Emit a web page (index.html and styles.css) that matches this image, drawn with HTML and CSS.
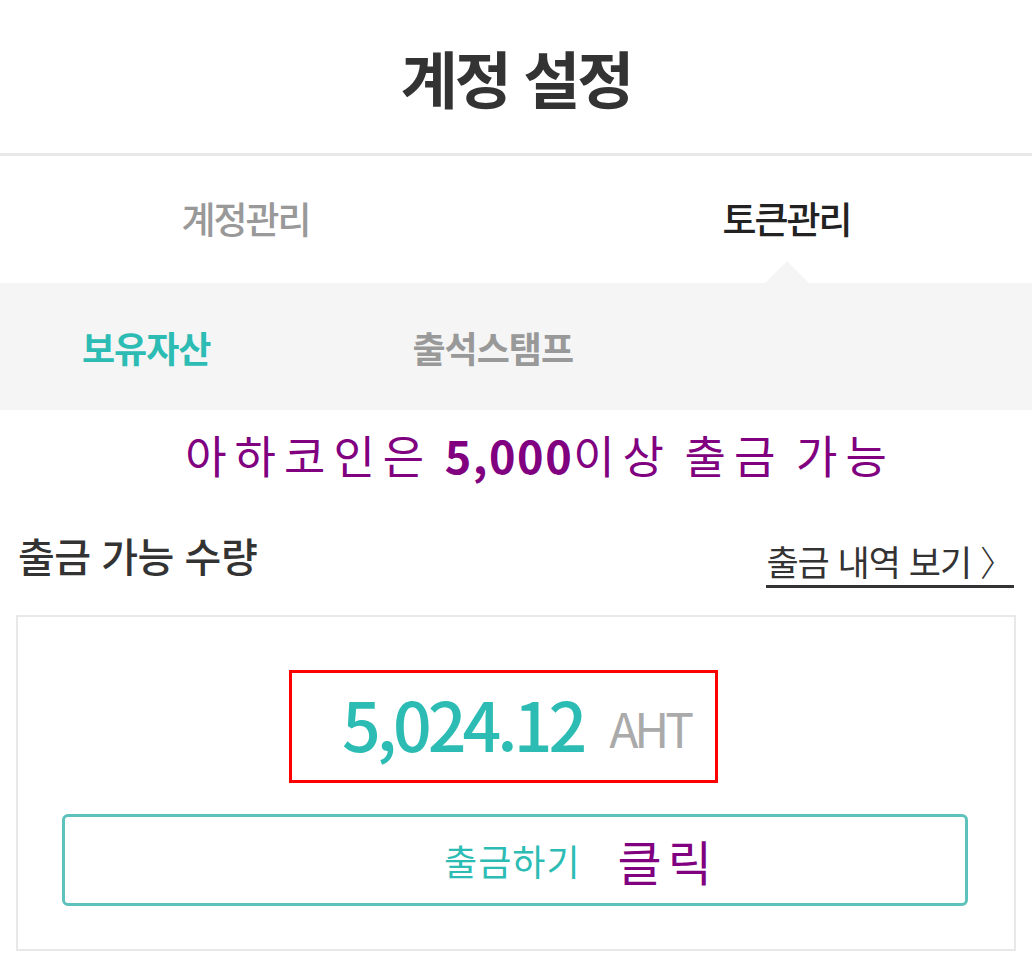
FILE: index.html
```html
<!DOCTYPE html>
<html lang="ko">
<head>
    <meta charset="UTF-8">
    <meta name="viewport" content="width=device-width, initial-scale=1.0">
    <title>계정 설정</title>
    <link rel="stylesheet" href="styles.css">
</head>
<body>
    <header class="page-header">
        <h1>계정 설정</h1>
    </header>

    <nav class="main-tabs">
        <a class="main-tab" href="#">계정관리</a>
        <a class="main-tab active" href="#">토큰관리</a>
    </nav>

    <nav class="sub-tabs">
        <a class="sub-tab active" href="#">보유자산</a>
        <a class="sub-tab" href="#">출석스탬프</a>
    </nav>

    <p class="notice">아하코인은 <b>5,000</b>이상 출금 가능</p>

    <main>
        <div class="section-head">
            <h2>출금 가능 수량</h2>
            <a class="history-link" href="#">출금 내역 보기 <span class="arrow">〉</span></a>
        </div>

        <section class="balance-box">
            <div class="amount">
                <span class="amount-value">5,024.12</span>
                <span class="amount-unit">AHT</span>
            </div>
            <button class="withdraw-btn">
                <span class="withdraw-label">출금하기</span>
                <span class="withdraw-click">클릭</span>
            </button>
        </section>
    </main>
</body>
</html>
```

FILE: styles.css
```css
body {
    font-family: "Noto Sans CJK KR", "Noto Sans", sans-serif;
    margin: 0;
    padding: 0;
    background-color: #fff;
    color: #333;
}

a {
    text-decoration: none;
}

.page-header {
    height: 153px;
    border-bottom: 3px solid #e8e8e8;
    display: flex;
    align-items: center;
    justify-content: center;
}

.page-header h1 {
    margin: 0;
    font-size: 62px;
    font-weight: 700;
    letter-spacing: -3px;
    color: #333;
}

.main-tabs {
    display: flex;
    height: 127px;
}

.main-tab {
    flex: 1;
    display: flex;
    align-items: center;
    justify-content: center;
    position: relative;
    padding-bottom: 4px;
    font-size: 37px;
    font-weight: 500;
    letter-spacing: -2px;
    color: #999;
}

.main-tab:first-child {
    padding-right: 26px;
}

.main-tab.active {
    color: #222;
    padding-left: 24px;
}

.main-tab.active::after {
    content: "";
    position: absolute;
    bottom: 0;
    left: 50%;
    margin-left: -10px;
    border-left: 22px solid transparent;
    border-right: 22px solid transparent;
    border-bottom: 22px solid #f5f5f5;
}

.sub-tabs {
    background-color: #f5f5f5;
    height: 127px;
    display: flex;
    align-items: center;
    padding-left: 82px;
    gap: 202px;
}

.sub-tab {
    font-size: 36px;
    font-weight: 700;
    letter-spacing: -1px;
    color: #999;
}

.sub-tab.active {
    color: #2cbcb4;
}

.notice {
    margin: 12px 0 0;
    padding-left: 48px;
    text-align: center;
    font-size: 45px;
    letter-spacing: 8px;
    word-spacing: -8px;
    color: #800080;
}

.notice b {
    letter-spacing: 1.5px;
}

main {
    padding: 0 18px 0 16px;
}

.section-head {
    display: flex;
    justify-content: space-between;
    align-items: center;
    margin-top: 40px;
    height: 56px;
}

.section-head h2 {
    margin: 0 0 0 2px;
    font-size: 40px;
    font-weight: 500;
    letter-spacing: -0.5px;
    color: #333;
}

.history-link {
    font-size: 35px;
    color: #333;
    letter-spacing: -1px;
    border-bottom: 3px solid #333;
    line-height: 48px;
    margin-top: 14px;
}

.history-link .arrow {
    font-weight: 300;
}

.balance-box {
    margin-top: 32px;
    margin-right: -2px;
    border: 2px solid #e8e8e8;
    height: 336px;
    box-sizing: border-box;
    padding: 53px 46px 0 44px;
    display: flex;
    flex-direction: column;
    align-items: center;
}

.amount {
    width: 429px;
    height: 113px;
    margin-right: 24px;
    box-sizing: border-box;
    border: 3px solid #f00;
    display: flex;
    align-items: center;
    justify-content: center;
    padding: 0 0 8px 26px;
    gap: 26px;
}

.amount-value {
    font-size: 68px;
    font-weight: 500;
    letter-spacing: -4px;
    color: #2cbcb4;
}

.amount-unit {
    font-size: 48px;
    letter-spacing: -4px;
    color: #aaa;
    margin-top: 8px;
}

.withdraw-btn {
    margin-top: 31px;
    width: 100%;
    height: 92px;
    border: 3px solid #5cc2bb;
    border-radius: 6px;
    background-color: #fff;
    display: flex;
    align-items: center;
    justify-content: center;
    gap: 37px;
    font-family: inherit;
    padding-left: 138px;
}

.withdraw-label {
    font-size: 36px;
    letter-spacing: 1px;
    color: #2cbcb4;
}

.withdraw-click {
    font-size: 48px;
    letter-spacing: 6px;
    color: #800080;
}
```
